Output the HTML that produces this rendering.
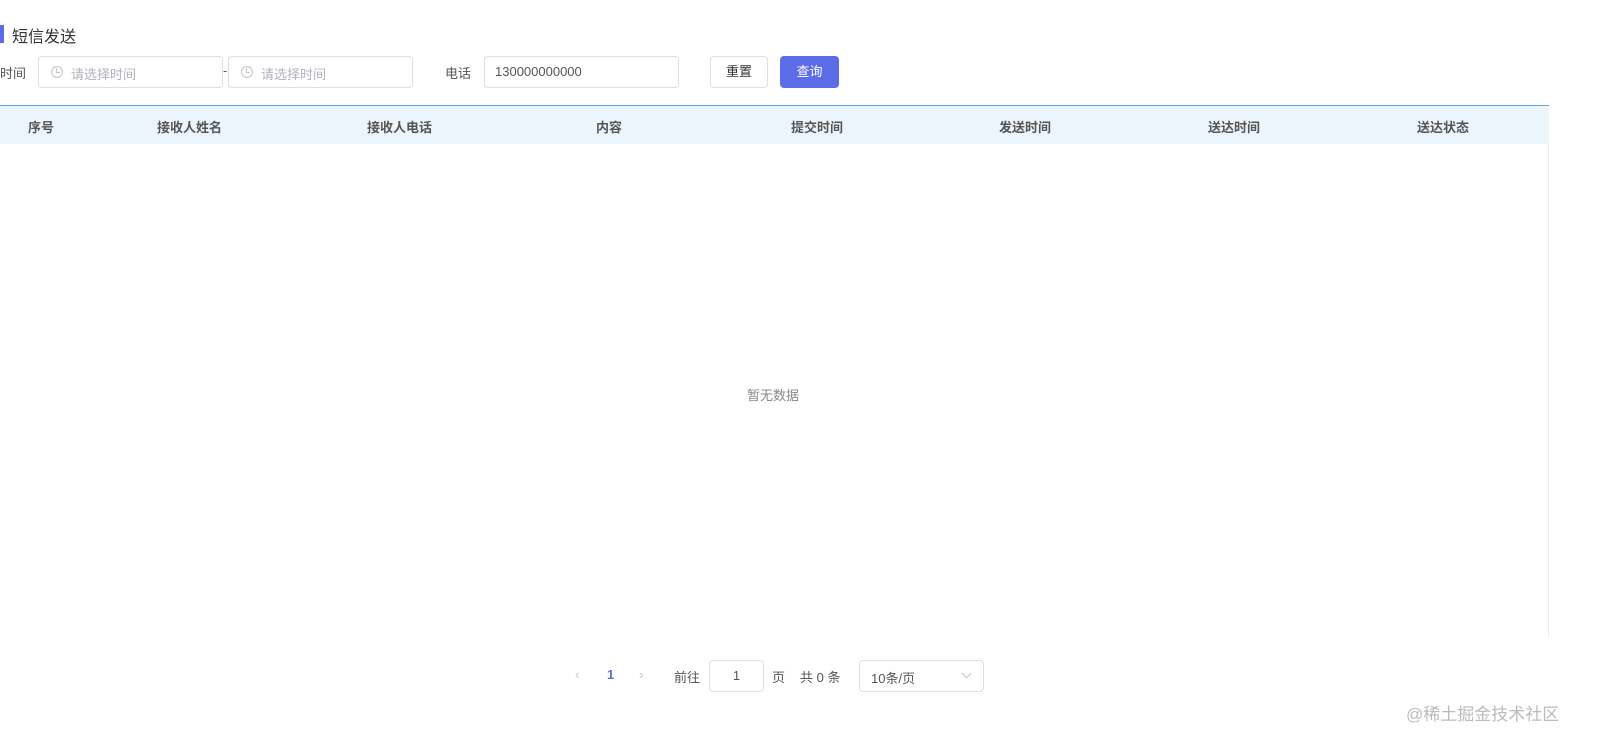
<!DOCTYPE html>
<html><head><meta charset="utf-8"><style>
*{box-sizing:border-box;margin:0;padding:0}
body{width:1608px;height:747px;background:#fff;font-family:"Liberation Sans","Noto Sans CJK SC",sans-serif;font-size:13px;color:#606266;position:relative;overflow:hidden}
.a{position:absolute}
.inp{position:absolute;border:1px solid #dcdfe6;border-radius:4px;height:32px;background:#fff}
.ph{color:#b0b3ba;font-size:13px;position:absolute;top:7px}
.clock{position:absolute;top:9px;width:12px;height:12px;border:1px solid #c0c4cc;border-radius:50%}
.clock:after{content:"";position:absolute;left:4px;top:1px;width:3px;height:4px;border-left:1px solid #c0c4cc;border-bottom:1px solid #c0c4cc}
th{font-weight:bold;color:#555}
.hd{position:absolute;top:105px;left:0;width:1549px;height:39px;background:#ecf5fc;border-top:1px solid #5aa7e0}
.hd span{position:absolute;top:11px;font-weight:bold;color:#555;font-size:13px}
</style></head><body>
<div class="a" style="left:0;top:25px;width:4px;height:18px;background:#5b6ce6"></div>
<div class="a" style="left:12px;top:23px;font-size:16px;color:#333">短信发送</div>
<div class="a" style="left:0;top:63px;font-size:13px;color:#555">时间</div>
<div class="inp" style="left:38px;top:56px;width:185px"><div class="clock" style="left:12px"></div><div class="ph" style="left:32px">请选择时间</div></div>
<div class="a" style="left:223px;top:63px">-</div>
<div class="inp" style="left:228px;top:56px;width:185px"><div class="clock" style="left:12px"></div><div class="ph" style="left:32px">请选择时间</div></div>
<div class="a" style="left:445px;top:63px;color:#555">电话</div>
<div class="inp" style="left:484px;top:56px;width:195px"><div class="a" style="left:10px;top:7px;color:#555">130000000000</div></div>
<div class="inp" style="left:710px;top:56px;width:58px;text-align:center;line-height:30px;color:#333">重置</div>
<div class="a" style="left:780px;top:56px;width:59px;height:32px;border-radius:4px;background:#5b6ce6;color:#fff;text-align:center;line-height:32px">查询</div>
<div class="hd">
<span style="left:28px">序号</span><span style="left:157px">接收人姓名</span><span style="left:367px">接收人电话</span><span style="left:596px">内容</span><span style="left:791px">提交时间</span><span style="left:999px">发送时间</span><span style="left:1208px">送达时间</span><span style="left:1417px">送达状态</span>
</div>
<div class="a" style="left:1548px;top:144px;width:1px;height:494px;background:#ebeef5"></div>
<div class="a" style="left:747px;top:385px;color:#888">暂无数据</div>
<div class="a" style="left:575px;top:667px;color:#c0c4cc">‹</div>
<div class="a" style="left:607px;top:667px;color:#5b6ce6;font-weight:bold">1</div>
<div class="a" style="left:639px;top:667px;color:#c0c4cc">›</div>
<div class="a" style="left:674px;top:667px;color:#555">前往</div>
<div class="inp" style="left:709px;top:660px;width:55px;text-align:center;line-height:30px;color:#555">1</div>
<div class="a" style="left:772px;top:667px;color:#555">页</div>
<div class="a" style="left:800px;top:667px;color:#555">共 0 条</div>
<div class="inp" style="left:859px;top:660px;width:125px"><div class="a" style="left:11px;top:7px;color:#555">10条/页</div><div class="a" style="left:103px;top:9px;width:7px;height:7px;border-right:1px solid #c0c4cc;border-bottom:1px solid #c0c4cc;transform:rotate(45deg)"></div></div>
<div class="a" style="left:1406px;top:700px;font-size:17px;color:#bbb">@稀土掘金技术社区</div>
</body></html>
